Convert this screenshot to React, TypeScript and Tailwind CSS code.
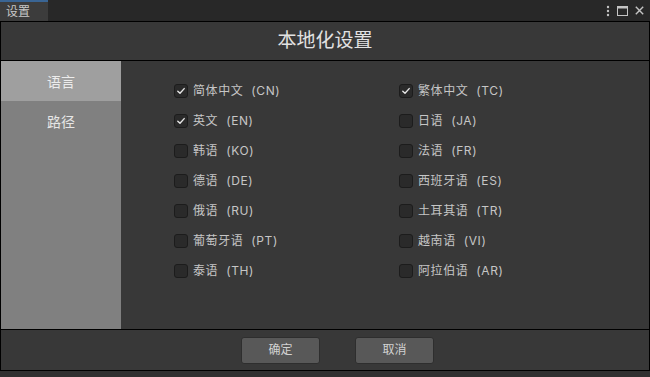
import React from 'react'

const languages: [string, boolean][] = [
  ['简体中文  (CN)', true],
  ['繁体中文  (TC)', true],
  ['英文  (EN)', true],
  ['日语  (JA)', false],
  ['韩语  (KO)', false],
  ['法语  (FR)', false],
  ['德语  (DE)', false],
  ['西班牙语  (ES)', false],
  ['俄语  (RU)', false],
  ['土耳其语  (TR)', false],
  ['葡萄牙语  (PT)', false],
  ['越南语  (VI)', false],
  ['泰语  (TH)', false],
  ['阿拉伯语  (AR)', false],
]

function Checkbox({ checked }: { checked: boolean }) {
  return (
    <span className="w-[14px] h-[14px] rounded-[3px] bg-[#2a2a2a] border border-[#1c1c1c] flex items-center justify-center flex-shrink-0">
      {checked && (
        <svg width="10" height="10" viewBox="0 0 10 10" fill="none">
          <path d="M1.8 5.2 L4 7.3 L8.2 2.6" stroke="#e6e6e6" strokeWidth="1.4" strokeLinecap="round" strokeLinejoin="round" />
        </svg>
      )}
    </span>
  )
}

export default function App() {
  return (
    <div
      className="w-[650px] h-[377px] bg-[#303030] flex flex-col overflow-hidden"
      style={{ fontFamily: '"Inter", "Noto Sans CJK SC", sans-serif' }}
    >
      {/* Tab strip */}
      <div className="h-[21px] flex items-stretch bg-[#282828] flex-shrink-0">
        <div className="w-[48px] bg-[#3c3c3c] border-t-2 border-[#3a6594] flex items-center pl-[6px] text-[12px] text-[#c8c8c8]">
          设置
        </div>
        <div className="flex-1" />
        <div className="flex items-center gap-[7px] pr-[6px] text-[#c4c4c4]">
          <svg width="4" height="12" viewBox="0 0 4 12">
            <circle cx="2" cy="2" r="1.2" fill="#c4c4c4" />
            <circle cx="2" cy="6" r="1.2" fill="#c4c4c4" />
            <circle cx="2" cy="10" r="1.2" fill="#c4c4c4" />
          </svg>
          <svg width="11" height="10" viewBox="0 0 11 10" fill="none">
            <rect x="0.5" y="0.5" width="10" height="9" stroke="#c4c4c4" />
            <rect x="0.5" y="0.5" width="10" height="2" fill="#c4c4c4" />
          </svg>
          <svg width="9" height="9" viewBox="0 0 9 9" fill="none">
            <path d="M0.8 0.8 L8.2 8.2 M8.2 0.8 L0.8 8.2" stroke="#c4c4c4" strokeWidth="1.4" />
          </svg>
        </div>
      </div>

      {/* Dialog */}
      <div className="h-[350px] border border-black flex flex-col flex-shrink-0 bg-[#383838]">
        <div className="h-[39px] flex items-center justify-center text-[19px] text-[#e2e2e2] border-b border-black">
          本地化设置
        </div>

        <div className="h-[268px] flex">
          <div className="w-[120px] bg-[#808080] flex flex-col">
            <div className="h-[40px] bg-[#9f9f9f] flex items-center justify-center text-[14px] text-[#ececec]">
              语言
            </div>
            <div className="h-[40px] flex items-center justify-center text-[14px] text-[#e6e6e6]">
              路径
            </div>
          </div>
          <div className="flex-1 pl-[53px] pt-[15px]">
            <div className="grid grid-cols-[225px_200px]">
              {languages.map(([label, checked]) => (
                <div key={label} className="h-[30px] flex items-center gap-[5px]">
                  <Checkbox checked={checked} />
                  <span className="text-[12px] tracking-[0.6px] text-[#c6c6c6] whitespace-pre">{label}</span>
                </div>
              ))}
            </div>
          </div>
        </div>

        <div className="flex-1 border-t border-black flex items-center pl-[240px] gap-[35px]">
          <button className="w-[79px] h-[27px] rounded-[3px] bg-[#585858] border border-[#2e2e2e] text-[12px] text-[#d2d2d2]">
            确定
          </button>
          <button className="w-[79px] h-[27px] rounded-[3px] bg-[#585858] border border-[#2e2e2e] text-[12px] text-[#d2d2d2]">
            取消
          </button>
        </div>
      </div>
    </div>
  )
}
